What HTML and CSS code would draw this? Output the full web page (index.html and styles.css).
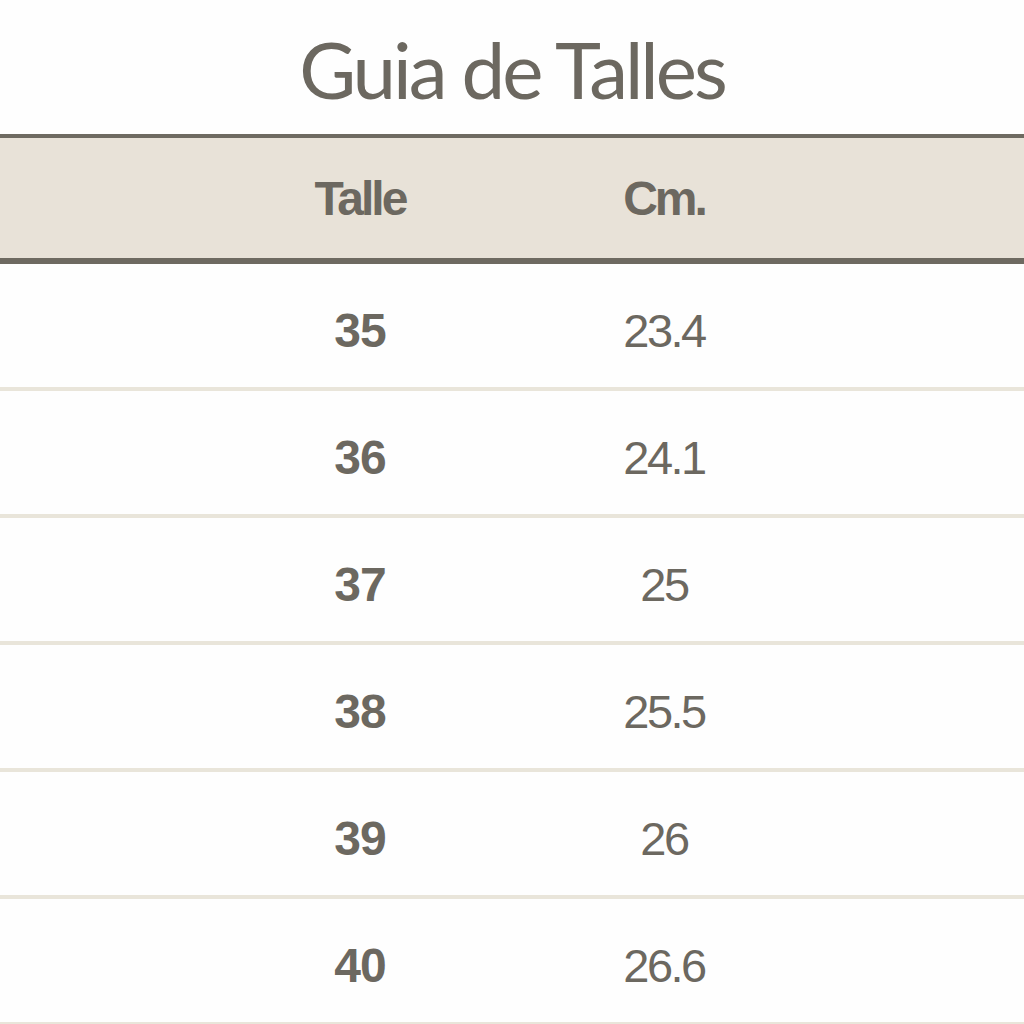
FILE: index.html
```html
<!DOCTYPE html>
<html lang="es">
<head>
<meta charset="utf-8">
<title>Guia de Talles</title>
<link rel="stylesheet" href="styles.css">
</head>
<body>
<h1 class="title">Guia de Talles</h1>
<div class="table">
  <div class="row head"><div class="cell">Talle</div><div class="cell">Cm.</div></div>
  <div class="row"><div class="cell num">35</div><div class="cell val">23.4</div></div>
  <div class="row"><div class="cell num">36</div><div class="cell val">24.1</div></div>
  <div class="row"><div class="cell num">37</div><div class="cell val">25</div></div>
  <div class="row"><div class="cell num">38</div><div class="cell val">25.5</div></div>
  <div class="row"><div class="cell num">39</div><div class="cell val">26</div></div>
  <div class="row"><div class="cell num">40</div><div class="cell val">26.6</div></div>
</div>
</body>
</html>
```
FILE: styles.css
```css
html, body { margin: 0; padding: 0; background: #fefefe; }
body { width: 1024px; height: 1024px; overflow: hidden; color: #6c6860; }
.title {
  margin: 0;
  height: 134px;
  display: flex;
  align-items: center;
  justify-content: center;
  font-family: Lato, "Noto Sans", sans-serif;
  font-weight: 400;
  font-size: 78px;
  letter-spacing: -3px;
  padding-top: 4px;
  box-sizing: border-box;
  color: #6c6860;
}
.table { display: flex; flex-direction: column; }
.row {
  display: grid;
  grid-template-columns: 304px 304px;
  padding-left: 208px;
  height: 123px;
  border-bottom: 4px solid #e9e5da;
  align-items: center;
  font-family: "Liberation Sans", Arial, sans-serif;
}
.row.head {
  height: 120px;
  background: #e8e2d8;
  border-top: 4px solid #6e6a61;
  border-bottom: 6px solid #6e6a61;
}
.cell { text-align: center; padding-top: 10px; }
.head .cell {
  padding-top: 0;
  font-weight: 700;
  font-size: 48px;
  letter-spacing: -3px;
}
.num { font-weight: 700; font-size: 48px; letter-spacing: -1px; }
.val { font-weight: 400; font-size: 47px; letter-spacing: -2.5px; }
```
